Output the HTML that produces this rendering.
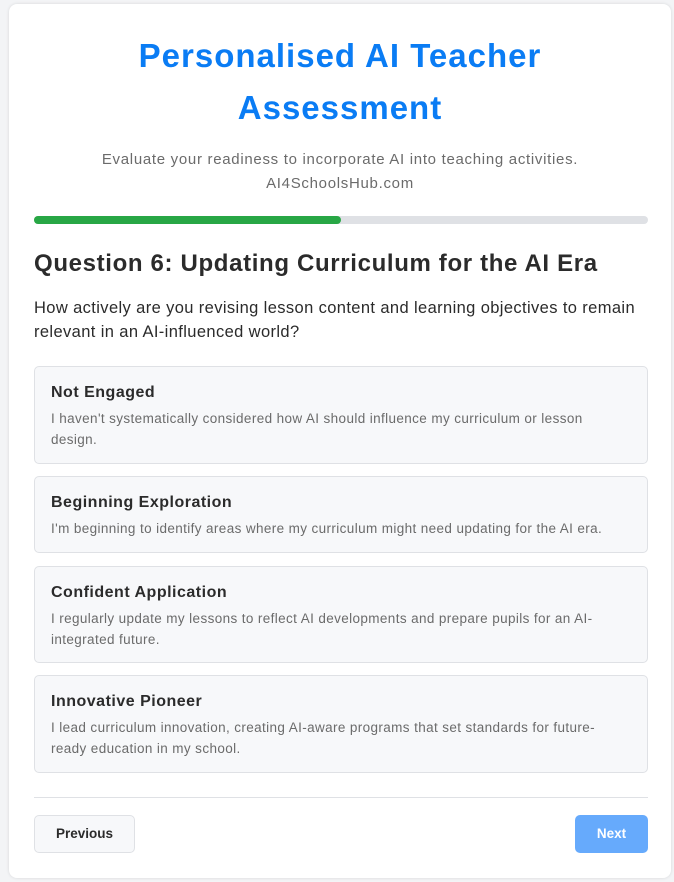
<!DOCTYPE html>
<html><head><style>
*{box-sizing:border-box;margin:0;padding:0}
body{width:674px;height:882px;background:#f3f4f6;font-family:"Liberation Sans",sans-serif;position:relative;overflow:hidden}
.card{position:absolute;left:9px;top:4px;width:662px;height:874px;background:#fff;border-radius:8px;box-shadow:0 0 3px rgba(0,0,0,.12)}
h1{position:absolute;left:0;width:100%;text-align:center;color:#0a7cf4;font-size:33px;font-weight:bold;line-height:52px;top:26px;letter-spacing:1px}
.sub{position:absolute;left:0;width:100%;text-align:center;color:#6b6b6b;font-size:15px;line-height:24px;top:144px;letter-spacing:.7px}
.bar{position:absolute;left:25px;top:212px;width:614px;height:8px;border-radius:4px;background:#dfe1e5}
.bar div{width:307px;height:8px;border-radius:4px;background:#28a745}
h2{position:absolute;left:25px;top:243px;font-size:24px;line-height:34px;color:#2b2b2b;font-weight:bold;letter-spacing:.65px;white-space:nowrap}
.q{position:absolute;left:25px;top:292px;font-size:16.5px;line-height:24px;color:#2b2b2b;letter-spacing:.38px;white-space:nowrap}
.opt{position:absolute;left:25px;width:614px;background:#f7f8fa;border:1px solid #dfe1e5;border-radius:5px;padding:15px 16px}
.opt b{display:block;font-size:16px;color:#2b2b2b;line-height:22px;margin-bottom:4px;letter-spacing:.5px}
.opt p{font-size:13.5px;line-height:21px;color:#6b6b6b;white-space:nowrap;letter-spacing:.38px}
.hr{position:absolute;left:25px;top:793px;width:614px;height:1px;background:#dfe1e5}
.btn{position:absolute;top:811px;height:38px;border-radius:5px;font-size:13.5px;font-weight:bold;text-align:center;line-height:36px}
</style></head><body>
<div class="card">
<h1>Personalised AI Teacher<br>Assessment</h1>
<div class="sub">Evaluate your readiness to incorporate AI into teaching activities.<br>AI4SchoolsHub.com</div>
<div class="bar"><div></div></div>
<h2>Question 6: Updating Curriculum for the AI Era</h2>
<div class="q">How actively are you revising lesson content and learning objectives to remain<br>relevant in an AI-influenced world?</div>
<div class="opt" style="top:362px;height:98px"><b>Not Engaged</b><p>I haven't systematically considered how AI should influence my curriculum or lesson<br>design.</p></div>
<div class="opt" style="top:472px;height:77px"><b>Beginning Exploration</b><p>I'm beginning to identify areas where my curriculum might need updating for the AI era.</p></div>
<div class="opt" style="top:562px;height:97px"><b>Confident Application</b><p>I regularly update my lessons to reflect AI developments and prepare pupils for an AI-<br>integrated future.</p></div>
<div class="opt" style="top:671px;height:98px"><b>Innovative Pioneer</b><p>I lead curriculum innovation, creating AI-aware programs that set standards for future-<br>ready education in my school.</p></div>
<div class="hr"></div>
<div class="btn" style="left:25px;width:101px;background:#f7f8fa;border:1px solid #dfe1e5;color:#2b2b2b">Previous</div>
<div class="btn" style="left:566px;width:73px;background:#66aafc;color:#fff;line-height:38px">Next</div>
</div>
</body></html>
